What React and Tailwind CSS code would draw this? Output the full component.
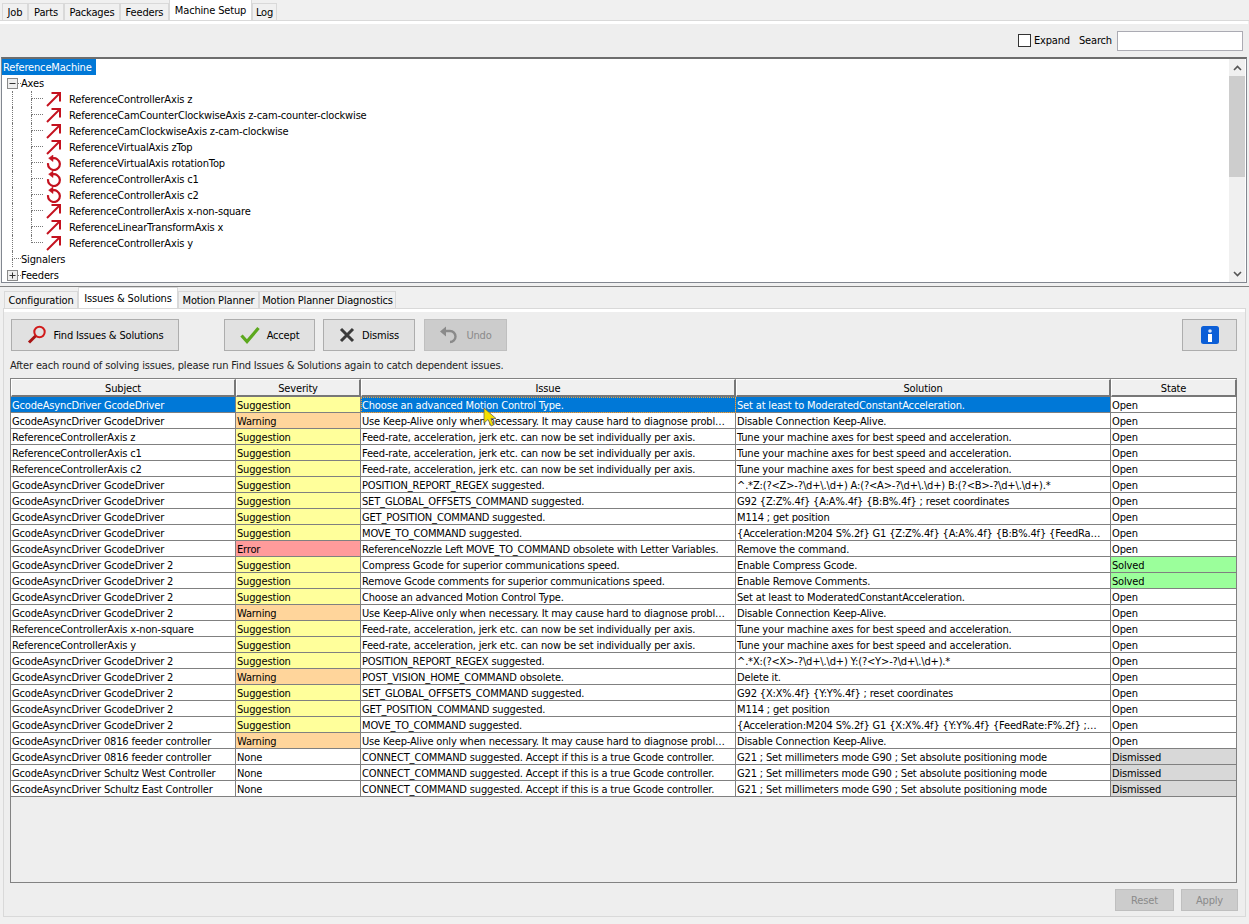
import React from "react";

const S = "Suggestion", W = "Warning", E = "Error", N = "None";
const G = "GcodeAsyncDriver GcodeDriver", G2 = "GcodeAsyncDriver GcodeDriver 2";
const FEED = "Feed-rate, acceleration, jerk etc. can now be set individually per axis.";
const TUNE = "Tune your machine axes for best speed and acceleration.";
const KEEP = "Use Keep-Alive only when necessary. It may cause hard to diagnose probl…";
const CONN = "CONNECT_COMMAND suggested. Accept if this is a true Gcode controller.";
const MM = "G21 ; Set millimeters mode G90 ; Set absolute positioning mode";
const rows = [
  [G, S, "Choose an advanced Motion Control Type.", "Set at least to ModeratedConstantAcceleration.", "Open"],
  [G, W, KEEP, "Disable Connection Keep-Alive.", "Open"],
  ["ReferenceControllerAxis z", S, FEED, TUNE, "Open"],
  ["ReferenceControllerAxis c1", S, FEED, TUNE, "Open"],
  ["ReferenceControllerAxis c2", S, FEED, TUNE, "Open"],
  [G, S, "POSITION_REPORT_REGEX suggested.", "^.*Z:(?<Z>-?\\d+\\.\\d+) A:(?<A>-?\\d+\\.\\d+) B:(?<B>-?\\d+\\.\\d+).*", "Open"],
  [G, S, "SET_GLOBAL_OFFSETS_COMMAND suggested.", "G92 {Z:Z%.4f} {A:A%.4f} {B:B%.4f} ; reset coordinates", "Open"],
  [G, S, "GET_POSITION_COMMAND suggested.", "M114 ; get position", "Open"],
  [G, S, "MOVE_TO_COMMAND suggested.", "{Acceleration:M204 S%.2f} G1 {Z:Z%.4f} {A:A%.4f} {B:B%.4f} {FeedRa…", "Open"],
  [G, E, "ReferenceNozzle Left MOVE_TO_COMMAND obsolete with Letter Variables.", "Remove the command.", "Open"],
  [G2, S, "Compress Gcode for superior communications speed.", "Enable Compress Gcode.", "Solved"],
  [G2, S, "Remove Gcode comments for superior communications speed.", "Enable Remove Comments.", "Solved"],
  [G2, S, "Choose an advanced Motion Control Type.", "Set at least to ModeratedConstantAcceleration.", "Open"],
  [G2, W, KEEP, "Disable Connection Keep-Alive.", "Open"],
  ["ReferenceControllerAxis x-non-square", S, FEED, TUNE, "Open"],
  ["ReferenceControllerAxis y", S, FEED, TUNE, "Open"],
  [G2, S, "POSITION_REPORT_REGEX suggested.", "^.*X:(?<X>-?\\d+\\.\\d+) Y:(?<Y>-?\\d+\\.\\d+).*", "Open"],
  [G2, W, "POST_VISION_HOME_COMMAND obsolete.", "Delete it.", "Open"],
  [G2, S, "SET_GLOBAL_OFFSETS_COMMAND suggested.", "G92 {X:X%.4f} {Y:Y%.4f} ; reset coordinates", "Open"],
  [G2, S, "GET_POSITION_COMMAND suggested.", "M114 ; get position", "Open"],
  [G2, S, "MOVE_TO_COMMAND suggested.", "{Acceleration:M204 S%.2f} G1 {X:X%.4f} {Y:Y%.4f} {FeedRate:F%.2f} ;…", "Open"],
  ["GcodeAsyncDriver 0816 feeder controller", W, KEEP, "Disable Connection Keep-Alive.", "Open"],
  ["GcodeAsyncDriver 0816 feeder controller", N, CONN, MM, "Dismissed"],
  ["GcodeAsyncDriver Schultz West Controller", N, CONN, MM, "Dismissed"],
  ["GcodeAsyncDriver Schultz East Controller", N, CONN, MM, "Dismissed"],
];
const sevBg = { Suggestion: "bg-[#ffff9b]", Warning: "bg-[#ffd59b]", Error: "bg-[#ff9b9b]", None: "bg-white" };
const stBg = { Open: "bg-white", Solved: "bg-[#9bff9b]", Dismissed: "bg-[#d8d8d8]" };

const axes = [
  ["l", "ReferenceControllerAxis z"],
  ["l", "ReferenceCamCounterClockwiseAxis z-cam-counter-clockwise"],
  ["l", "ReferenceCamClockwiseAxis z-cam-clockwise"],
  ["l", "ReferenceVirtualAxis zTop"],
  ["r", "ReferenceVirtualAxis rotationTop"],
  ["r", "ReferenceControllerAxis c1"],
  ["r", "ReferenceControllerAxis c2"],
  ["l", "ReferenceControllerAxis x-non-square"],
  ["l", "ReferenceLinearTransformAxis x"],
  ["l", "ReferenceControllerAxis y"],
];

const LinearIcon = () => (
  <svg width="16" height="16" viewBox="0 0 16 16" className="shrink-0" fill="none" stroke="#c4121f" strokeWidth="2">
    <path d="M1 15 L13.5 2.5" />
    <path d="M5.5 2 H14 V10.5" />
  </svg>
);
const RotIcon = () => (
  <svg width="16" height="16" viewBox="0 0 16 16" className="shrink-0" fill="none" stroke="#c4121f" strokeWidth="2.2">
    <path d="M6.5 3.4 A5.9 5.9 0 1 1 2.1 8.2" />
    <path d="M7 0 L2.6 3.2 L7 6.6 Z" fill="#c4121f" strokeWidth="0.5" />
  </svg>
);
const Box = ({ plus }) => (
  <svg width="11" height="11" viewBox="0 0 11 11" className="shrink-0">
    <rect x="0.5" y="0.5" width="10" height="10" fill="#eee" stroke="#8a8a8a" />
    <path d={plus ? "M2.5 5.5 H8.5 M5.5 2.5 V8.5" : "M2.5 5.5 H8.5"} stroke="#333" />
  </svg>
);
const Conn = ({ w, last }) => (
  <div className={`${w} h-4 shrink-0 flex flex-col`}>
    <div className="h-2 border-l border-b border-dotted border-[#777]" />
    <div className={`h-2 border-l border-dotted ${last ? "border-transparent" : "border-[#777]"}`} />
  </div>
);
const Tab = ({ w, active, children }) => (
  <div
    className={
      active
        ? `${w} h-[21px] pt-[1px] bg-white border border-b-0 border-[#d9d9d9] flex items-center justify-center shrink-0 whitespace-nowrap`
        : `${w} h-[17px] pt-[2px] bg-[#f0f0f0] border border-b-0 border-[#d9d9d9] flex items-center justify-center shrink-0 whitespace-nowrap`
    }
  >
    {children}
  </div>
);
const Btn = ({ w, icon, off, children, cls }) => (
  <div
    className={`${w} ${cls || ""} h-[32px] shrink-0 flex items-center justify-center gap-[7px] border ${
      off ? "bg-[#cccccc] border-[#bfbfbf] text-[#8a8a8a]" : "bg-[#e1e1e1] border-[#adadad] text-black"
    }`}
  >
    {icon}
    {children && <span className="pt-[2px]">{children}</span>}
  </div>
);

const cols = ["w-[225px]", "w-[125px]", "w-[375px]", "w-[375px]", "w-[126px]"];
const heads = ["Subject", "Severity", "Issue", "Solution", "State"];

export default function App() {
  return (
    <div
      className="w-[1249px] h-[924px] bg-[#f0f0f0] text-black text-[11px] tracking-[-0.16px] leading-4 flex flex-col overflow-hidden"
      style={{ fontFamily: '"DejaVu Sans Condensed", "DejaVu Sans", sans-serif', fontStretch: "condensed" }}
    >
      {/* top tabs */}
      <div className="h-[21px] pl-[2px] flex items-end border-b border-[#d9d9d9] shrink-0">
        <Tab w="w-[26px]">Job</Tab>
        <Tab w="w-[36px]">Parts</Tab>
        <Tab w="w-[56px]">Packages</Tab>
        <Tab w="w-[49px]">Feeders</Tab>
        <Tab w="w-[83px]" active>Machine Setup</Tab>
        <Tab w="w-[25px]">Log</Tab>
      </div>
      <div className="h-[3px] mr-[1px] bg-white shrink-0" />
      {/* search strip */}
      <div className="h-[33px] flex items-center justify-end pr-[6px] shrink-0 bg-[#eeeeee]">
        <div className="w-[13px] h-[13px] border border-[#333] bg-white mr-[3px]" />
        <span className="mr-[9px]">Expand</span>
        <span className="mr-[5px]">Search</span>
        <div className="w-[126px] h-[20px] bg-white border border-[#ababb3]" />
      </div>
      {/* tree */}
      <div className="h-[226px] mx-[1px] mr-[2px] border border-[#828790] border-t-2 border-t-[#6d6d6d] bg-white flex shrink-0">
        <div className="flex-1 overflow-hidden">
          <div className="h-4 flex"><span className="bg-[#0078d7] text-white px-[1px] w-[94px] whitespace-nowrap leading-[18px]">ReferenceMachine</span></div>
          <div className="h-4 flex items-center pl-[5px]">
            <Box />
            <div className="w-[3px] border-b border-dotted border-[#777]" />
            <span className="pt-[2px]">Axes</span>
          </div>
          {axes.map(([k, t], i) => (
            <div key={t} className="h-4 flex items-center">
              <div className="w-[10px] shrink-0" />
              <div className="w-[19px] h-4 shrink-0 border-l border-dotted border-[#777]" />
              <Conn w="w-[12px]" last={i === axes.length - 1} />
              <div className="w-[3px] shrink-0" />
              {k === "l" ? <LinearIcon /> : <RotIcon />}
              <span className="ml-[7px] pt-[2px]">{t}</span>
            </div>
          ))}
          <div className="h-4 flex items-center">
            <div className="w-[10px] shrink-0" />
            <Conn w="w-[9px]" />
            <span className="pt-[2px]">Signalers</span>
          </div>
          <div className="h-4 flex items-center pl-[5px]">
            <Box plus />
            <div className="w-[3px] border-b border-dotted border-[#777]" />
            <span className="pt-[2px]">Feeders</span>
          </div>
        </div>
        <div className="w-[16px] bg-[#f0f0f0] flex flex-col items-center mr-[1px] shrink-0">
          <div className="h-[17px] flex items-center justify-center">
            <svg width="9" height="6" viewBox="0 0 9 6" fill="none" stroke="#555" strokeWidth="1.6"><path d="M1 5 L4.5 1.5 L8 5" /></svg>
          </div>
          <div className="w-full h-[101px] bg-[#cdcdcd]" />
          <div className="flex-1" />
          <div className="h-[17px] flex items-center justify-center">
            <svg width="9" height="6" viewBox="0 0 9 6" fill="none" stroke="#555" strokeWidth="1.6"><path d="M1 1 L4.5 4.5 L8 1" /></svg>
          </div>
        </div>
      </div>
      <div className="h-[4px] shrink-0 border-b border-[#828282]" />
      {/* lower tabs */}
      <div className="h-[21px] pl-[4px] flex items-end shrink-0">
        <Tab w="w-[74px]">Configuration</Tab>
        <Tab w="w-[100px]" active>Issues &amp; Solutions</Tab>
        <Tab w="w-[81px]">Motion Planner</Tab>
        <Tab w="w-[137px]">Motion Planner Diagnostics</Tab>
      </div>
      {/* lower panel */}
      <div className="ml-[3px] w-[1243px] h-[609px] border border-[#d9d9d9] bg-[#eeeeee] flex flex-col shrink-0">
        <div className="h-[3px] bg-white shrink-0" />
        <div className="flex pl-[7px] pr-[8px] pt-[7px] shrink-0">
          <Btn
            w="w-[168px]"
            icon={
              <svg width="20" height="20" viewBox="0 0 20 20" fill="none">
                <circle cx="12.5" cy="7" r="5.2" stroke="#d11a1a" strokeWidth="2" />
                <path d="M8.5 11 L2 17.5" stroke="#a81414" strokeWidth="3" />
              </svg>
            }
          >
            Find Issues &amp; Solutions
          </Btn>
          <Btn
            w="w-[91px]"
            cls="ml-[45px]"
            icon={
              <svg width="20" height="18" viewBox="0 0 20 18" fill="none">
                <path d="M1.5 9.5 L7 15.5 L18.5 2" stroke="#5ca81e" strokeWidth="3.2" />
              </svg>
            }
          >
            Accept
          </Btn>
          <Btn
            w="w-[92px]"
            cls="ml-[8px]"
            icon={
              <svg width="16" height="16" viewBox="0 0 16 16" fill="none">
                <path d="M2 2 L14 14 M14 2 L2 14" stroke="#3a3a3a" strokeWidth="3" />
              </svg>
            }
          >
            Dismiss
          </Btn>
          <Btn
            w="w-[83px]"
            cls="ml-[9px]"
            off
            icon={
              <svg width="20" height="18" viewBox="0 0 20 18" fill="none">
                <path d="M5 5 H11 A5.5 5.5 0 0 1 11 16" stroke="#8a8a8a" strokeWidth="2.4" />
                <path d="M1 5.5 L7 0.5 V10.5 Z" fill="#8a8a8a" />
              </svg>
            }
          >
            Undo
          </Btn>
          <div className="flex-1" />
          <Btn
            w="w-[55px]"
            icon={
              <svg width="18" height="18" viewBox="0 0 18 18">
                <rect width="18" height="18" rx="2.5" fill="#0b5ed7" />
                <circle cx="9" cy="5" r="1.8" fill="#d9e6fb" />
                <rect x="7" y="8" width="4" height="8" fill="#fff" />
              </svg>
            }
          />
        </div>
        <div className="h-[27px] pl-[6px] pt-[2px] flex items-center shrink-0 text-[#222]">
          After each round of solving issues, please run Find Issues &amp; Solutions again to catch dependent issues.
        </div>
        {/* table */}
        <div className="relative ml-[6px] w-[1227px] h-[505px] border border-[#828282] shrink-0">
          <div className="flex h-[18px]">
            {heads.map((h, i) => (
              <div
                key={h}
                className={`${cols[i]} shrink-0 pt-[2px] flex items-center justify-center bg-[#f0f0f0] border-t border-l border-t-white border-l-white border-r-2 border-b-2 border-r-[#777] border-b-[#777]`}
              >
                {h}
              </div>
            ))}
          </div>
          {rows.map((r, ri) => (
            <div key={ri} className="flex h-4">
              {r.map((c, ci) => {
                const sel = ri === 0 && ci !== 1 && ci !== 4;
                let bg = "bg-white";
                if (sel) bg = "bg-[#0078d7] text-white";
                else if (ci === 1) bg = sevBg[c];
                else if (ci === 4) bg = stBg[c];
                const focus = ri === 0 && ci === 2;
                return (
                  <div
                    key={ci}
                    className={`${cols[ci]} ${bg} shrink-0 h-4 pl-[1px] leading-[17px] whitespace-nowrap overflow-hidden border-r border-b border-[#808080] ${
                      focus ? "outline-1 outline-dotted outline-offset-[-1px] outline-[#e8a33d]" : ""
                    }`}
                  >
                    {c}
                  </div>
                );
              })}
            </div>
          ))}
          {/* mouse pointer */}
          <svg
            width="16"
            height="22"
            viewBox="0 0 16 22"
            className="absolute left-[472px] top-[28px]"
          >
            <path d="M1 1 L1 16 L5 12.5 L8 19 L10.5 18 L8 11.5 L13 11.5 Z" fill="#f4e000" stroke="#555" strokeWidth="0.7" />
          </svg>
        </div>
        <div className="flex justify-end pr-[7px] pt-[6px] gap-[7px] shrink-0">
          <div className="w-[59px] h-[22px] pt-[2px] flex items-center justify-center bg-[#cccccc] border border-[#bfbfbf] text-[#8a8a8a]">Reset</div>
          <div className="w-[57px] h-[22px] pt-[2px] flex items-center justify-center bg-[#cccccc] border border-[#bfbfbf] text-[#8a8a8a]">Apply</div>
        </div>
      </div>
    </div>
  );
}
